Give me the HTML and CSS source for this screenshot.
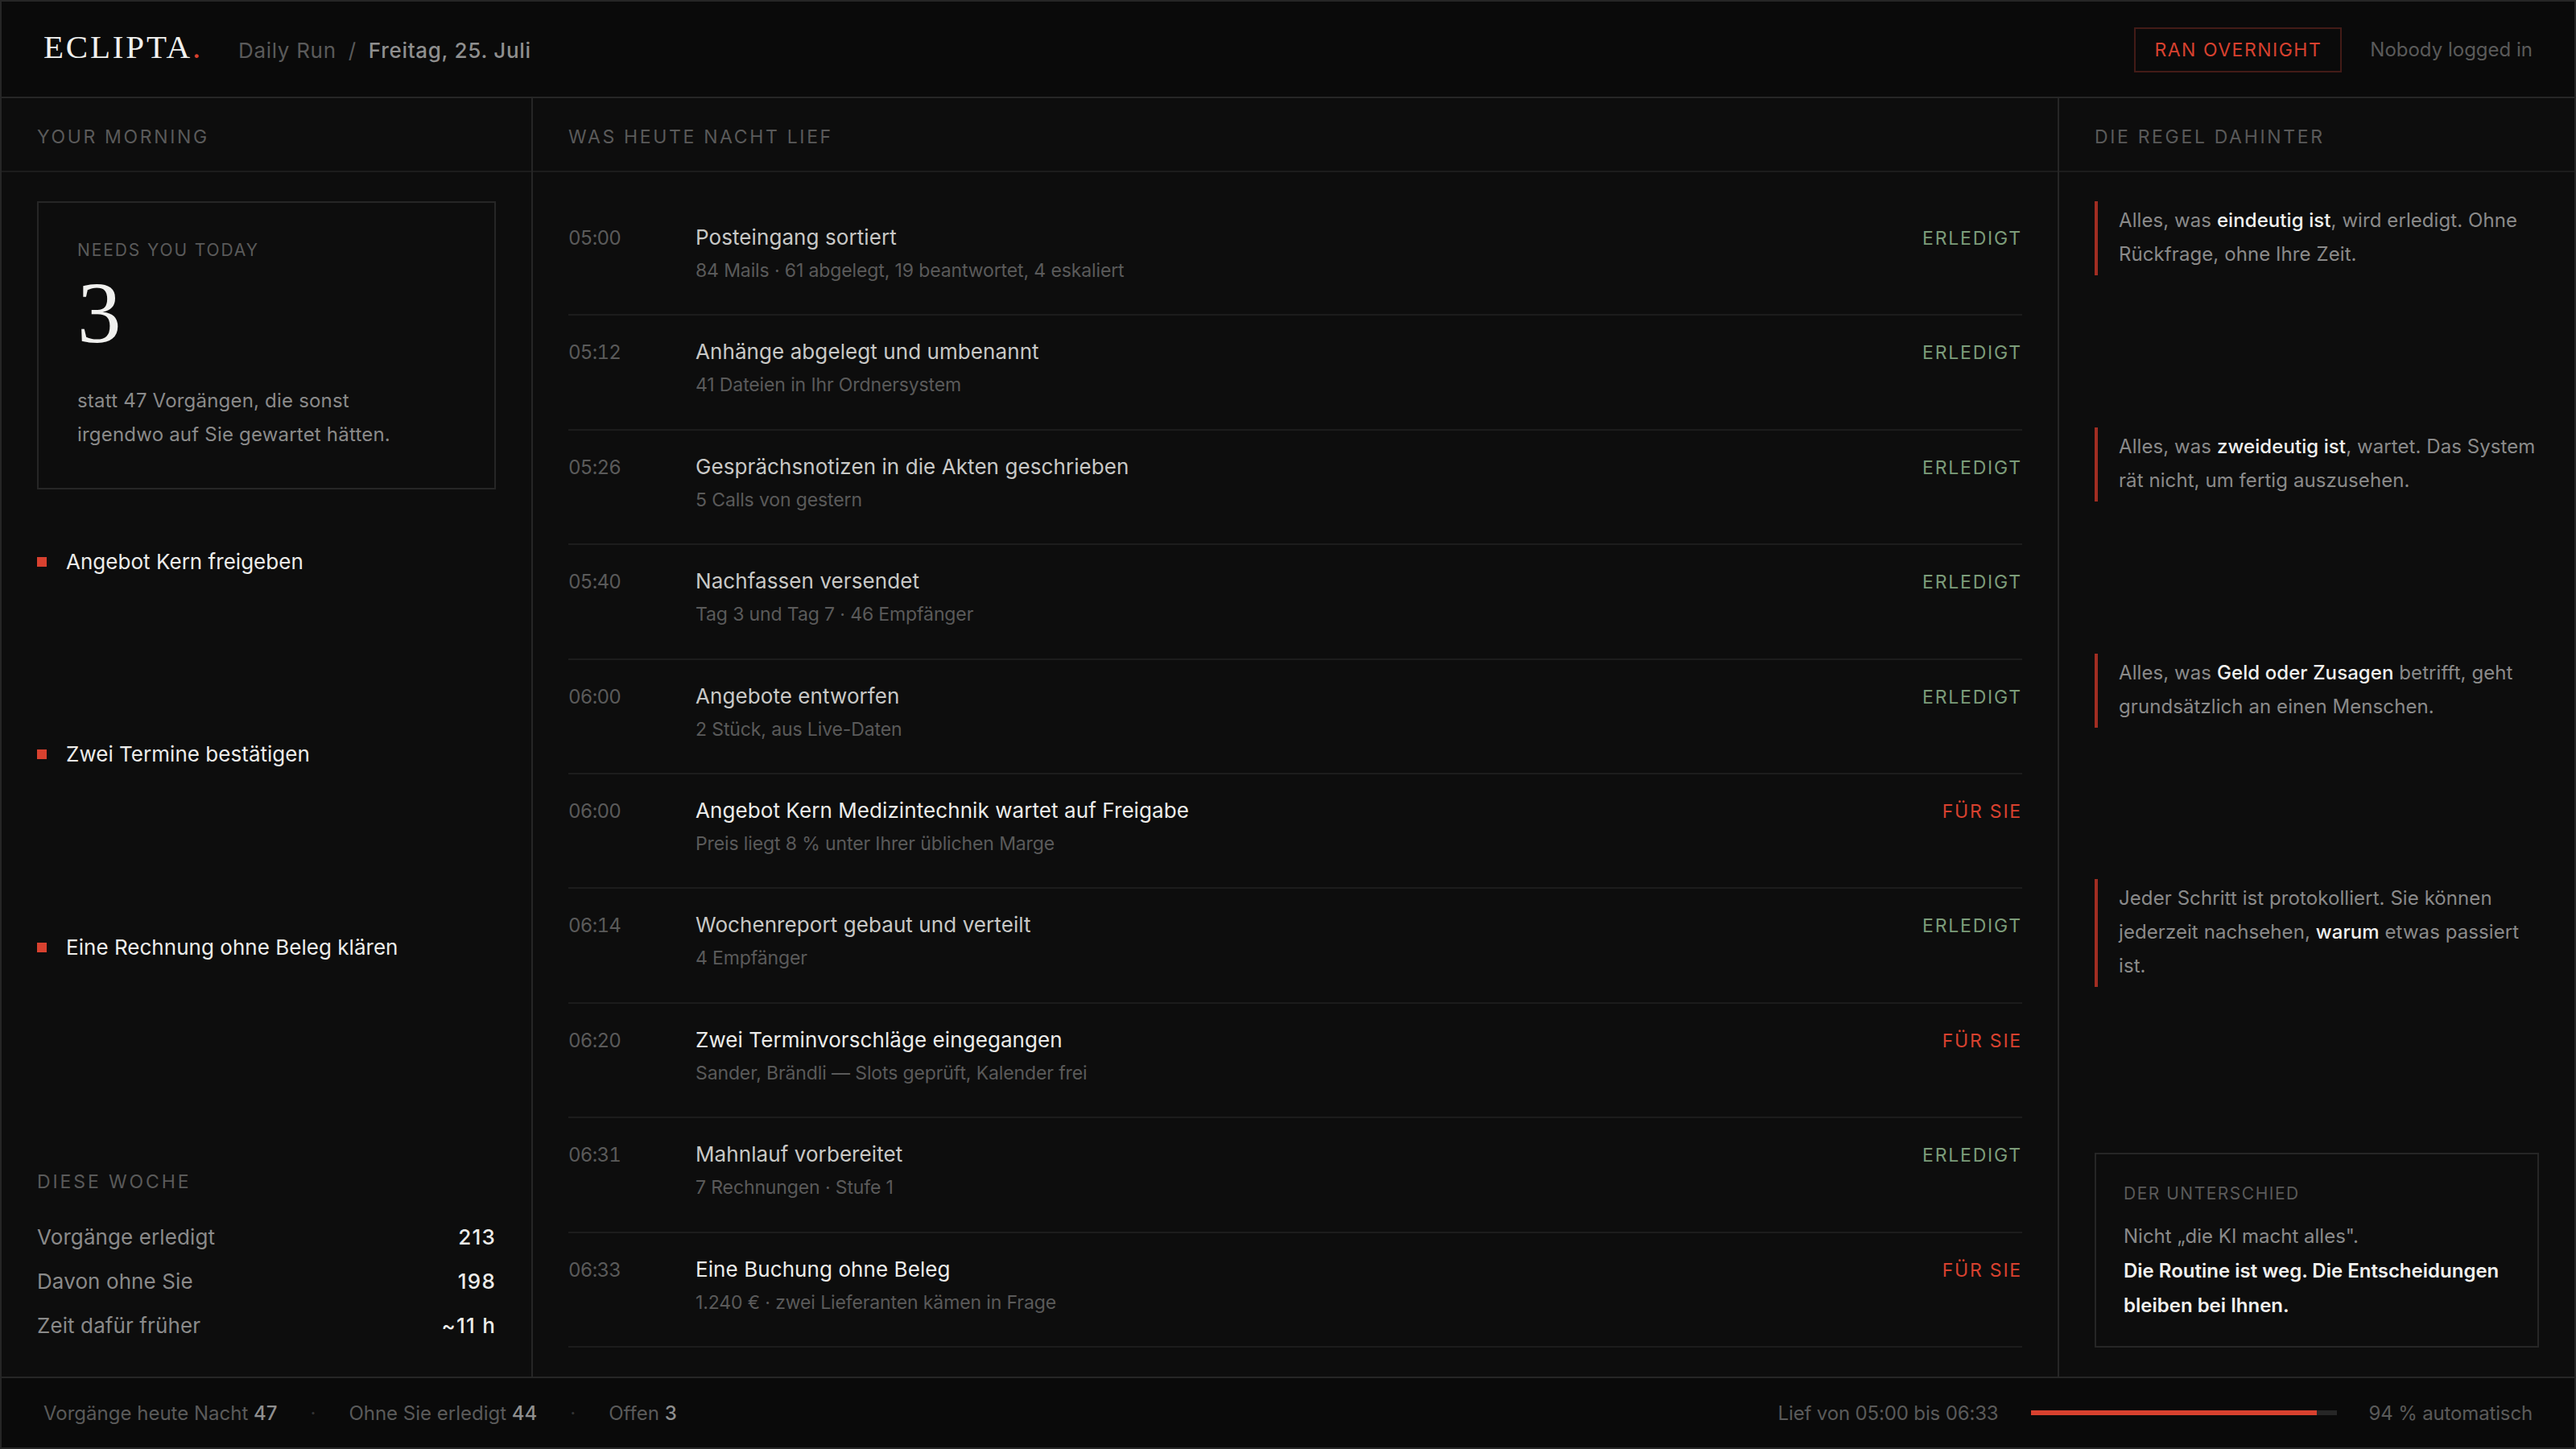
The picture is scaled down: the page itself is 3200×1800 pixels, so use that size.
FILE: index.html
```html
<!DOCTYPE html>
<html lang="de">
<head>
	<meta charset="utf-8">
	<title>Eclipta – Daily Run</title>
	<link rel="stylesheet" href="styles.css">
</head>
<body>
	<div class="app">
		<header class="topbar">
			<div class="topbar-left">
				<div class="logo">ECLIPTA<span>.</span></div>
				<div class="crumb">Daily Run <i>/</i> <b>Freitag, 25. Juli</b></div>
			</div>
			<div class="topbar-right">
				<div class="badge">RAN OVERNIGHT</div>
				<div class="user">Nobody logged in</div>
			</div>
		</header>

		<main class="columns">
			<section class="col morning">
				<h2 class="col-head">YOUR MORNING</h2>
				<div class="col-body">
					<div class="card">
						<div class="label">NEEDS YOU TODAY</div>
						<div class="number">3</div>
						<p>statt 47 Vorgängen, die sonst<br>irgendwo auf Sie gewartet hätten.</p>
					</div>
					<ul class="todo">
						<li>Angebot Kern freigeben</li>
						<li>Zwei Termine bestätigen</li>
						<li>Eine Rechnung ohne Beleg klären</li>
					</ul>
					<div class="week">
						<h3>DIESE WOCHE</h3>
						<div class="stat"><span>Vorgänge erledigt</span><b>213</b></div>
						<div class="stat"><span>Davon ohne Sie</span><b>198</b></div>
						<div class="stat"><span>Zeit dafür früher</span><b>~11 h</b></div>
					</div>
				</div>
			</section>

			<section class="col log">
				<h2 class="col-head">WAS HEUTE NACHT LIEF</h2>
				<div class="col-body">
					<div class="row">
						<time>05:00</time>
						<div class="what">Posteingang sortiert<small>84 Mails · 61 abgelegt, 19 beantwortet, 4 eskaliert</small></div>
						<div class="status">ERLEDIGT</div>
					</div>
					<div class="row">
						<time>05:12</time>
						<div class="what">Anhänge abgelegt und umbenannt<small>41 Dateien in Ihr Ordnersystem</small></div>
						<div class="status">ERLEDIGT</div>
					</div>
					<div class="row">
						<time>05:26</time>
						<div class="what">Gesprächsnotizen in die Akten geschrieben<small>5 Calls von gestern</small></div>
						<div class="status">ERLEDIGT</div>
					</div>
					<div class="row">
						<time>05:40</time>
						<div class="what">Nachfassen versendet<small>Tag 3 und Tag 7 · 46 Empfänger</small></div>
						<div class="status">ERLEDIGT</div>
					</div>
					<div class="row">
						<time>06:00</time>
						<div class="what">Angebote entworfen<small>2 Stück, aus Live-Daten</small></div>
						<div class="status">ERLEDIGT</div>
					</div>
					<div class="row open">
						<time>06:00</time>
						<div class="what">Angebot Kern Medizintechnik wartet auf Freigabe<small>Preis liegt 8 % unter Ihrer üblichen Marge</small></div>
						<div class="status">FÜR SIE</div>
					</div>
					<div class="row">
						<time>06:14</time>
						<div class="what">Wochenreport gebaut und verteilt<small>4 Empfänger</small></div>
						<div class="status">ERLEDIGT</div>
					</div>
					<div class="row open">
						<time>06:20</time>
						<div class="what">Zwei Terminvorschläge eingegangen<small>Sander, Brändli — Slots geprüft, Kalender frei</small></div>
						<div class="status">FÜR SIE</div>
					</div>
					<div class="row">
						<time>06:31</time>
						<div class="what">Mahnlauf vorbereitet<small>7 Rechnungen · Stufe 1</small></div>
						<div class="status">ERLEDIGT</div>
					</div>
					<div class="row open">
						<time>06:33</time>
						<div class="what">Eine Buchung ohne Beleg<small>1.240 € · zwei Lieferanten kämen in Frage</small></div>
						<div class="status">FÜR SIE</div>
					</div>
				</div>
			</section>

			<section class="col rules">
				<h2 class="col-head">DIE REGEL DAHINTER</h2>
				<div class="col-body">
					<div class="rule-list">
						<p>Alles, was <b>eindeutig ist</b>, wird erledigt. Ohne Rückfrage, ohne Ihre Zeit.</p>
						<p>Alles, was <b>zweideutig ist</b>, wartet. Das System rät nicht, um fertig auszusehen.</p>
						<p>Alles, was <b>Geld oder Zusagen</b> betrifft, geht grundsätzlich an einen Menschen.</p>
						<p>Jeder Schritt ist protokolliert. Sie können jederzeit nachsehen, <b>warum</b> etwas passiert ist.</p>
					</div>
					<div class="diff">
						<div class="label">DER UNTERSCHIED</div>
						<p>Nicht „die KI macht alles".<br><b>Die Routine ist weg. Die Entscheidungen bleiben bei Ihnen.</b></p>
					</div>
				</div>
			</section>
		</main>

		<footer class="bottombar">
			<div class="counts">
				<span>Vorgänge heute Nacht <b>47</b></span>
				<i>·</i>
				<span>Ohne Sie erledigt <b>44</b></span>
				<i>·</i>
				<span>Offen <b>3</b></span>
			</div>
			<div class="run">
				<span class="tight">Lief von 05:00 bis 06:33</span>
				<div class="bar"><div class="bar-fill" style="width: 93.6%"></div></div>
				<span class="tight">94 % automatisch</span>
			</div>
		</footer>
	</div>
</body>
</html>
```
FILE: styles.css
```css
*{
	box-sizing: border-box;
	margin: 0;
	padding: 0;
}
body{
	background: #0a0a0a;
	color: #5a5a5a;
	font-family: Inter, "Liberation Sans", sans-serif;
	font-size: 24px;
}
i{
	font-style: normal;
}
.app{
	width: 3200px;
	height: 1800px;
	display: flex;
	flex-direction: column;
	border: 2px solid #262626;
}

/* topbar */
.topbar{
	height: 120px;
	padding: 0 52px;
	display: flex;
	justify-content: space-between;
	align-items: center;
	border-bottom: 2px solid #262626;
}
.topbar-left{
	display: flex;
	align-items: baseline;
	gap: 44px;
	padding-bottom: 7px;
}
.logo{
	font-family: "Liberation Serif", serif;
	font-size: 41px;
	letter-spacing: 2.8px;
	color: #f0f0ee;
}
.logo span{
	color: #d8412f;
}
.crumb{
	font-size: 26px;
	letter-spacing: 0.7px;
}
.crumb i{
	margin: 0 7px;
}
.crumb b{
	font-weight: 500;
	color: #8f8f8f;
}
.topbar-right{
	display: flex;
	align-items: center;
	gap: 35px;
	padding-top: 1px;
}
.badge{
	height: 56px;
	padding: 0 23px;
	border: 2px solid #431b17;
	font-size: 23px;
	line-height: 52px;
	letter-spacing: 1.5px;
	color: #d8412f;
}

/* columns */
.columns{
	flex: 1;
	min-height: 0;
	display: grid;
	grid-template-columns: 660px 1fr 640px;
	background: #0d0d0d;
}
.col{
	display: flex;
	flex-direction: column;
	border-right: 2px solid #262626;
}
.rules{
	border-right: 0;
}
.col-head{
	height: 92px;
	padding: 5px 44px 0;
	border-bottom: 2px solid #1c1c1c;
	font-size: 23px;
	font-weight: 400;
	line-height: 86px;
	letter-spacing: 2.65px;
}
.col-body{
	flex: 1;
	display: flex;
	flex-direction: column;
	padding: 36px 44px;
}
.label{
	font-size: 21px;
	line-height: 30px;
	letter-spacing: 1.9px;
}

/* left */
.card{
	height: 358px;
	padding: 44px 48px;
	border: 2px solid #262626;
}
.number{
	margin-top: 10px;
	font-family: "Liberation Serif", serif;
	font-size: 109px;
	line-height: 106px;
	color: #f0f0ee;
}
.card p{
	margin-top: 35px;
	line-height: 42px;
	letter-spacing: 0.2px;
	color: #8a8a8a;
}
.todo{
	flex: 1;
	display: flex;
	flex-direction: column;
	margin-top: 71px;
	list-style: none;
}
.todo li{
	flex: 1;
	display: flex;
	gap: 24px;
	font-size: 26px;
	line-height: 38px;
	letter-spacing: 0.03px;
	color: #ececea;
}
.todo li::before{
	content: '';
	width: 12px;
	height: 12px;
	margin-top: 13px;
	background: #d8412f;
}
.week{
	padding-top: 57px;
}
.week h3{
	margin-bottom: 27px;
	font-size: 23px;
	font-weight: 400;
	line-height: 28px;
	letter-spacing: 2.9px;
}
.stat{
	display: flex;
	justify-content: space-between;
	font-size: 26px;
	line-height: 55px;
	letter-spacing: 0.1px;
	color: #8a8a8a;
}
.stat b{
	font-weight: 450;
	letter-spacing: 1.2px;
	color: #ececea;
}

/* log */
.row{
	flex: 1;
	display: grid;
	grid-template-columns: 158px 1fr auto;
	align-items: baseline;
	padding-top: 24px;
	border-bottom: 2px solid #1c1c1c;
}
.row time{
	letter-spacing: -0.7px;
	font-variant-numeric: tabular-nums;
}
.what{
	font-size: 26px;
	line-height: 41px;
	letter-spacing: 0.08px;
	color: #c8c8c6;
}
.what small{
	display: block;
	margin-top: 3px;
	font-size: 23px;
	line-height: 36px;
	letter-spacing: -0.12px;
	color: #5a5a5a;
}
.status{
	font-size: 23px;
	letter-spacing: 1.8px;
	color: #7c9c7a;
}
.open .what{
	color: #ececea;
}
.open .status{
	color: #d8412f;
}

/* right */
.rule-list{
	flex: 1;
	display: grid;
	grid-template-rows: repeat(4, 1fr);
	align-items: start;
	margin-bottom: 59px;
}
.rule-list p{
	padding: 3px 0 5px 26px;
	border-left: 4px solid #a12d22;
	line-height: 42px;
	letter-spacing: 0.08px;
	color: #8a8a8a;
}
.rule-list b{
	font-weight: 500;
	color: #f0f0ee;
}
.diff{
	padding: 34px 34px 29px;
	border: 2px solid #262626;
}
.diff .label{
	letter-spacing: 1.5px;
}
.diff p{
	margin-top: 16px;
	line-height: 43px;
	color: #8a8a8a;
}
.diff b{
	font-weight: 600;
	color: #f0f0ee;
}

/* bottombar */
.bottombar{
	height: 88px;
	padding: 0 52px;
	display: flex;
	justify-content: space-between;
	align-items: center;
	border-top: 2px solid #262626;
}
.counts, .run{
	display: flex;
	align-items: center;
	gap: 40px;
}
.counts{
	gap: 41px;
}
.counts b{
	font-weight: 500;
	color: #8f8f8f;
}
.counts i{
	color: #333;
}
.tight{
	letter-spacing: -0.15px;
}
.bar{
	width: 380px;
	height: 6px;
	background: #262626;
}
.bar-fill{
	height: 6px;
	background: #d8412f;
}
```
